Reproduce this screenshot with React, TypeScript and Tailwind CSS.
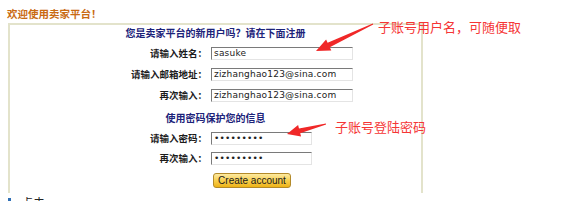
import type { ReactNode } from 'react'

const cjk = "font-['Noto_Sans_CJK_SC','Noto_Sans',sans-serif]"

function Row({ label, children }: { label: string; children: ReactNode }) {
  return (
    <div className="flex h-[13px] items-center">
      <div className="w-[197px] text-right text-[9.5px] font-bold leading-none text-[#1b1b1b]">
        {label}
      </div>
      <div className="ml-[4px] flex">{children}</div>
    </div>
  )
}

function Field({ value, width }: { value: string; width: string }) {
  return (
    <div
      className={`${width} flex h-[13px] items-center border border-t-[#7a7a7a] border-l-[#7a7a7a] border-r-[#e4e4e4] border-b-[#e4e4e4] bg-white pl-[2px] font-['DejaVu_Sans',sans-serif] text-[9px] leading-none tracking-[0.2px] text-[#222]`}
    >
      {value}
    </div>
  )
}

export default function App() {
  return (
    <div className={`relative h-[201px] w-[579px] overflow-hidden bg-white ${cjk}`}>
      <div className="pl-[7px] pt-[8px] text-[10.5px] font-bold leading-[12px] text-[#c96a12]">
        欢迎使用卖家平台！
      </div>

      <div className="ml-[8px] mt-[3px] h-[170px] w-[415px] border-l-2 border-r-2 border-t-2 border-[#e3e3cb]">
        <div className="pt-[2px] text-center text-[10px] font-bold leading-[12px] text-[#1c237a]">
          您是卖家平台的新用户吗？请在下面注册
        </div>
        <div className="mt-[8px] flex flex-col gap-[8px]">
          <Row label="请输入姓名：">
            <Field value="sasuke" width="w-[142px]" />
          </Row>
          <Row label="请输入邮箱地址：">
            <Field value="zizhanghao123@sina.com" width="w-[142px]" />
          </Row>
          <Row label="再次输入：">
            <Field value="zizhanghao123@sina.com" width="w-[142px]" />
          </Row>
        </div>

        <div className="mt-[10px] text-center text-[10px] font-bold leading-[12px] text-[#1c237a]">
          使用密码保护您的信息
        </div>
        <div className="mt-[8px] flex flex-col gap-[7px]">
          <Row label="请输入密码：">
            <Field value="•••••••••" width="w-[101px]" />
          </Row>
          <Row label="再次输入：">
            <Field value="•••••••••" width="w-[101px]" />
          </Row>
        </div>
        <div className="mt-[8px] flex pl-[203px]">
          <button
            type="button"
            className="flex h-[15px] w-[78px] items-center justify-center rounded-[3px] border border-[#b38a2a] bg-gradient-to-b from-[#fdeaa0] via-[#f7cf4c] to-[#eeb30f] font-['Liberation_Sans',sans-serif] text-[10px] leading-none text-[#1a1a1a]"
          >
            Create account
          </button>
        </div>
      </div>

      <div className="mt-[3px] flex items-start gap-[10px] pl-[8px]">
        <span className="mt-[2px] h-[3px] w-[3px] bg-[#2f6fb5]" />
        <span className="text-[12px] leading-[14px] text-[#222]">点击</span>
      </div>

      <svg className="absolute left-0 top-0" width="579" height="201" viewBox="0 0 579 201">
        <polygon
          fill="#f02828"
          points="372.8,23.5 327.6,42.7 326.1,39.6 316,51 331.3,50.4 329.8,47.3 373.2,24.5"
        />
        <polygon
          fill="#f02828"
          points="325.9,123.5 299,128.4 298.1,125 287,134 301.1,136.6 300.2,133.2 326.1,124.5"
        />
      </svg>

      <div className="absolute left-[378px] top-[19px] text-[13px] leading-[16px] text-[#f53535]">
        子账号用户名，可随便取
      </div>
      <div className="absolute left-[335px] top-[119px] text-[13px] leading-[16px] text-[#f53535]">
        子账号登陆密码
      </div>
    </div>
  )
}
